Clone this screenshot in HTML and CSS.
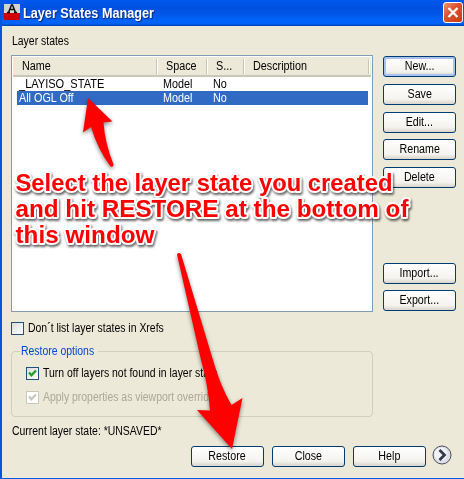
FILE: index.html
```html
<!DOCTYPE html>
<html lang="en">
<head>
<meta charset="utf-8">
<title>Layer States Manager</title>
<link rel="stylesheet" href="styles.css">
</head>
<body>
<div class="window">
  <header class="titlebar">
    <svg class="app-icon" width="16" height="16" viewBox="0 0 16 16"><path fill="#d2d2d2" d="M0 0h16v9H0z"/><path fill="#d00008" d="M0 9h16v7H0z"/><path fill="none" stroke="#111" stroke-width="1.500" d="M4.500 8.500 7.500 1h1L11.500 8.500M5.500 5.500h5M3 8.500h3M10 8.500h3"/></svg>
    <h1>Layer States Manager</h1>
    <button class="close" aria-label="Close window"><svg width="16" height="17" viewBox="0 0 16 17"><path d="m3.500 4 9 9m0-9-9 9" stroke="#fff" stroke-width="2.300"/></svg></button>
  </header>
  <main>
    <div class="label top"><b>Layer states</b></div>
    <div class="content">
      <div class="list">
        <div class="head row"><span><b>Name</b></span><span><b>Space</b></span><span><b>S...</b></span><span><b>Description</b></span></div>
        <div class="row"><span><b class="iso">_LAYISO_STATE</b></span><span><b>Model</b></span><span><b>No</b></span><span></span></div>
        <div class="row selected"><span><b>All OGL Off</b></span><span><b>Model</b></span><span><b>No</b></span><span></span></div>
      </div>
      <div class="actions">
        <button class="btn focus"><b>New...</b></button>
        <button class="btn"><b>Save</b></button>
        <button class="btn"><b>Edit...</b></button>
        <button class="btn up"><b>Rename</b></button>
        <button class="btn"><b>Delete</b></button>
        <button class="btn import"><b>Import...</b></button>
        <button class="btn up"><b>Export...</b></button>
      </div>
    </div>
    <label class="check xrefs"><i class="box"></i><b>Don´t list layer states in Xrefs</b></label>
    <fieldset>
      <legend><b>Restore options</b></legend>
      <label class="check turn"><i class="box"><svg width="11" height="11" viewBox="0 0 11 11"><path d="m2 4.500 2.400 2.700L9 2.500" fill="none" stroke="#21a121" stroke-width="2.300"/></svg></i><b>Turn off layers not found in layer state</b></label>
      <label class="check disabled"><i class="box"><svg width="11" height="11" viewBox="0 0 11 11"><path d="m2 4.500 2.400 2.700L9 2.500" fill="none" stroke="#cac8bb" stroke-width="2.300"/></svg></i><b>Apply properties as viewport overrides</b></label>
    </fieldset>
    <div class="label current"><b>Current layer state: *UNSAVED*</b></div>
    <footer>
      <button class="btn"><b>Restore</b></button>
      <button class="btn"><b>Close</b></button>
      <button class="btn"><b>Help</b></button>
      <svg class="more" width="20" height="20" viewBox="0 0 20 20"><circle cx="10" cy="10" r="9" fill="#dde0e8" stroke="#4a4c54"/><circle cx="9" cy="9" r="6.500" fill="#f2f3f7"/><path d="m7.500 5 5 5-5 5" fill="none" stroke="#343a48" stroke-width="2.800"/></svg>
    </footer>
  </main>
</div>
<svg class="annotation" width="464" height="479" viewBox="0 0 464 479">
  <g class="arrows">
    <path d="M88 98 112.500 121.500 103.500 122.500Q105 143 113.500 164.500 113.500 167.500 110.500 166.500 98 150 91 127L83 132.500Z"/>
    <path d="M177 254.500Q178.500 252 181 254L213 360Q220 385 231.500 405L242.500 398 232 449 197 410 210 410.500Q208 385 201 360Z"/>
  </g>
  <g class="note">
    <text x="15.500" y="191" textLength="377" lengthAdjust="spacingAndGlyphs">Select the layer state you created</text>
    <text x="15.500" y="217" textLength="393" lengthAdjust="spacingAndGlyphs">and hit RESTORE at the bottom of</text>
    <text x="15.500" y="243" textLength="139" lengthAdjust="spacingAndGlyphs">this window</text>
  </g>
</svg>
</body>
</html>
```

FILE: styles.css
```css
* { box-sizing: border-box; }
body { margin: 0; width: 464px; height: 479px; overflow: hidden; background: #ece9d8; color: #000; font: 12px/14px "Liberation Sans", Arial, sans-serif; }
b { display: inline-block; font-weight: normal; transform: scaleX(.87); transform-origin: left; }
.window { height: 479px; border-left: 2px solid #0855dd; border-bottom: 1px solid #0855ee; background: #ece9d8; }
.titlebar { height: 26px; display: flex; align-items: flex-start; padding: 4px 0 0 2px; background: linear-gradient(#0058ee 0, #0050df 30%, #0056e8 55%, #0064fb 82%, #0060f4 92%, #003dae 100%); }
.app-icon { flex: none; }
h1 { margin: 1px auto 0 3px; font: bold 14px/17px "Liberation Sans", Arial, sans-serif; color: #fff; text-shadow: 1px 1px 1px #0b2670; transform: scaleX(.905); transform-origin: left; white-space: nowrap; }
.close { margin: -2px 1px 0 0; padding: 1px; width: 20px; height: 21px; border: 1px solid #fff; border-radius: 3px; background: linear-gradient(135deg, #ee9278, #de5431 40%, #c83a14); }
.close svg { display: block; }
main { padding-left: 9px; }
.label { white-space: nowrap; }
.top { padding-top: 8px; height: 29px; padding-left: 1px; }
.content { display: flex; gap: 10px; }
.list { width: 362px; height: 257px; border: 1px solid #7f9db9; background: #fff; padding: 1px 1px 0; }
.row { display: grid; grid-template-columns: 144px 50px 37px 1fr; height: 14px; margin: 0 3px 0 4px; white-space: nowrap; }
.row span { padding-left: 2px; }
.row b { transform: scaleX(.9); }
.head { height: 20px; margin: 0; background: #ece9d8; border-bottom: 2px solid #cbc7b8; padding: 2px 0; line-height: 15px; }
.head span { padding-left: 9px; border-right: 1px solid #c7c5b2; box-shadow: 1px 0 #fff; }
.head span:last-child { margin-right: 2px; }
.row .iso { transform: scaleX(.92); }
.selected { background: #316ac5; color: #fff; }
.actions { display: flex; flex-direction: column; gap: 7px; padding-top: 1px; }
.btn { width: 73px; height: 21px; padding: 0 0 1px; border: 1px solid #003c74; border-radius: 3px; background: linear-gradient(#fff, #f4f3ee 75%, #d9d4cb); color: #000; font: 12px/17px "Liberation Sans", Arial, sans-serif; }
.btn b { transform: scaleX(.89); transform-origin: center; }
.focus { box-shadow: inset 0 0 0 2px #a9c2f0; }
.up { margin-top: -1px; }
.import { margin-top: 68px; }
.check { display: flex; align-items: center; height: 14px; white-space: nowrap; }
.box { width: 13px; height: 13px; border: 1px solid #1c5180; background: linear-gradient(135deg, #dcdcd7, #fff); flex: none; }
.box svg { display: block; }
.check b { margin-left: 4px; }
.xrefs { margin-top: 9px; }
fieldset { margin: 9px 0 0; padding: 8px 0 0 14px; width: 362px; height: 73px; border: 1px solid #d0d0bf; border-radius: 4px; }
legend { width: 78px; padding: 0 0 0 1px; margin-left: -6px; color: #0046d5; white-space: nowrap; }
.turn { margin-bottom: 10px; }
.disabled { color: #aca899; }
.disabled .box { border-color: #cac8bb; background: #fff; }
.current { margin-top: 7px; padding-left: 1px; }
footer { display: flex; gap: 8px; margin: 8px 0 0 180px; }
.more { margin-top: -1px; margin-left: -2px; }
.annotation { position: absolute; inset: 0; pointer-events: none; }
.arrows { fill: #f00; filter: drop-shadow(0 2px 2px #0007); }
.note { font: bold 24px "Liberation Sans", Arial, sans-serif; fill: #f00; stroke: #fff; stroke-width: 4px; stroke-linejoin: round; paint-order: stroke; filter: drop-shadow(1px 2px 1px #0009); }
```
